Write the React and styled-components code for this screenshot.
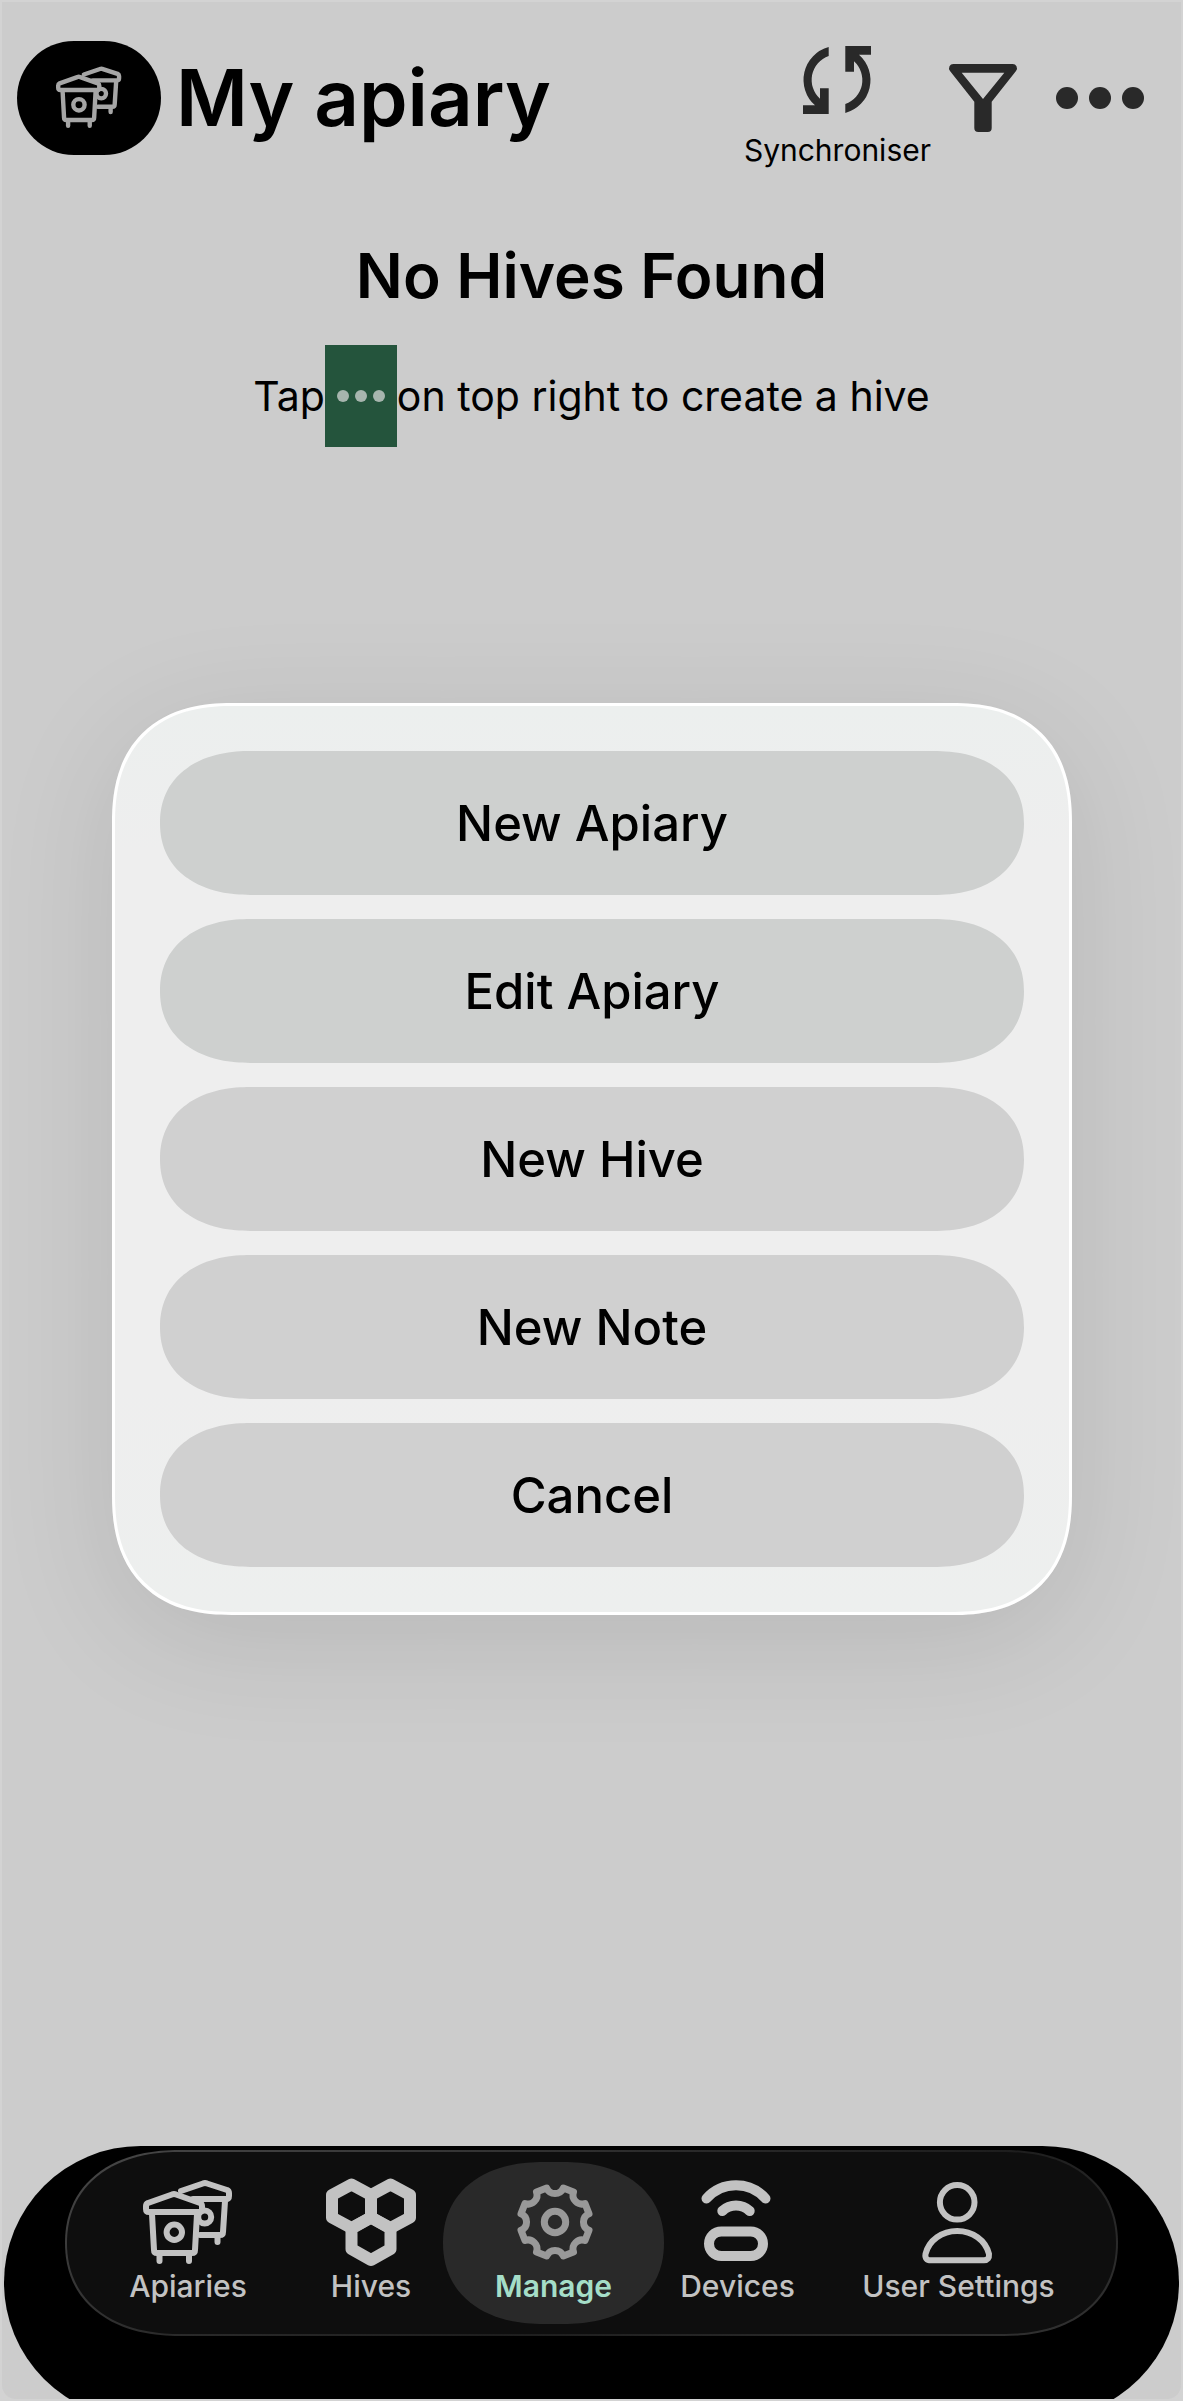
import styled, { createGlobalStyle } from "styled-components";

const GlobalStyle = createGlobalStyle`
    * {
        box-sizing: border-box;
    }

    body {
        margin: 0;
        background-color: rgb(211,211,211);
        font-family: Inter, "Liberation Sans", sans-serif;
    }

    button {
        padding: 0;
        border: none;
        background: none;
        color: inherit;
        font-family: inherit;
        cursor: pointer;
    }

    svg {
        display: block;
        overflow: visible;
    }
`

const Frame = styled.div`
    padding: 2px;
    background-color: rgb(211,211,211);
`

const Screen = styled.div`
    display: flex;
    flex-direction: column;
    min-height: calc(100vh - 4px);
    overflow: hidden;
    border-radius: 0 0 14px 14px;
    background-color: rgb(204,204,204);
    color: black;
`

const Header = styled.header`
    display: flex;
    align-items: flex-start;
    padding: 39px 37px 0 15px;
    gap: 15px;

    h1 {
        flex: 1;
        margin: 0;
        font-size: 78px;
        font-weight: 600;
        line-height: 114px;
        white-space: nowrap;
    }
`

const Badge = styled.button`
    display: flex;
    align-items: center;
    justify-content: center;
    width: 144px;
    height: 114px;
    border-radius: 57px;
    background-color: black;
    color: rgb(166,166,166);
`

const Actions = styled.div`
    display: flex;
    align-items: flex-start;
    color: rgb(41,41,41);
`

const IconButton = styled.button`
    display: flex;
    align-items: center;
    height: 114px;
    margin-left: ${props => props.$gap}px;
`

const SyncButton = styled.button`
    display: flex;
    flex-direction: column;
    align-items: center;
    gap: 18px;
    padding-top: 5px;

    span {
        color: black;
        font-size: 30px;
        line-height: 36px;
    }
`

const Main = styled.main`
    display: flex;
    flex-direction: column;
    align-items: center;
    flex: 1;
    gap: 29px;
    padding-top: 68px;

    h2 {
        margin: 0;
        font-size: 62px;
        font-weight: 600;
        line-height: 80px;
    }

    p {
        display: flex;
        align-items: center;
        margin: 0;
        font-size: 41px;
        line-height: 48px;
    }
`

const Hint = styled.span`
    display: flex;
    align-items: center;
    justify-content: center;
    width: 72px;
    height: 102px;
    background-color: rgb(36,84,60);
    color: rgb(167,181,174);
`

const Overlay = styled.div`
    position: fixed;
    inset: 0;
    display: flex;
    align-items: center;
    justify-content: center;
    padding: 0 111px 83px 112px;
`

const Menu = styled.div`
    display: flex;
    flex-direction: column;
    flex: 1;
    gap: 24px;
    padding: 45px;
    border: 3px solid white;
    border-radius: 104px;
    background: linear-gradient(rgb(236,239,238), rgb(238,238,238) 16%, rgb(238,238,238) 75%, rgb(237,239,238));
    box-shadow: 0 24px 120px rgba(0,0,0,0.1);

    @supports (corner-shape: superellipse(1.25)) {
        border-radius: 120px;
        corner-shape: superellipse(1.25);
    }
`

const MenuItem = styled.button`
    height: 144px;
    border-radius: 76px / 72px;
    background-color: ${props => props.$tinted ? "rgb(206,208,207)" : "rgb(208,208,208)"};
    color: black;
    font-size: 49px;
    font-weight: 500;

    @supports (corner-shape: superellipse(1.15)) {
        border-radius: 90px / 72px;
        corner-shape: superellipse(1.15);
    }
`

/* taller than the visible area, the rounded bottom runs off the screen */
const Dock = styled.footer`
    margin: 0 2px -20px 2px;
    padding: 4px 61px 83px 61px;
    border-radius: 137px;
    background-color: black;
`

const TabBar = styled.nav`
    display: flex;
    height: 186px;
    padding: 10px;
    border: 2px solid transparent;
    border-radius: 98px / 93px;
    background:
        linear-gradient(rgb(14,14,14), rgb(14,14,14)) padding-box,
        linear-gradient(160deg, rgb(72,72,72), rgb(42,42,42) 40%, rgb(30,30,30) 60%, rgb(50,50,50)) border-box;

    @supports (corner-shape: superellipse(1.15)) {
        border-radius: 114px / 93px;
        corner-shape: superellipse(1.15);
    }
`

const Tab = styled.button`
    display: flex;
    flex-direction: column;
    align-items: center;
    flex: ${props => props.$size} 1 0;
    padding-top: 16px;
    border-radius: 86px / 81px;
    background-color: ${props => props.$active ? "rgb(41,41,41)" : "transparent"};
    color: ${props => props.$active ? "rgb(153,153,153)" : "rgb(194,194,194)"};

    @supports (corner-shape: superellipse(1.15)) {
        border-radius: 100px / 81px;
        corner-shape: superellipse(1.15);
    }

    span {
        color: ${props => props.$active ? "rgb(165,222,200)" : "rgb(194,194,194)"};
        font-size: 30px;
        font-weight: ${props => props.$active ? 600 : 500};
        line-height: 36px;
        white-space: nowrap;
    }
`

function LineIcon({ size = 90, width = 6, children }) {
    return (
        <svg width={size} height={size} viewBox="0 0 90 90" fill="none" stroke="currentColor"
            strokeWidth={width} strokeLinecap="round" strokeLinejoin="round" aria-hidden="true">
            {children}
        </svg>
    )
}

function ApiaryIcon({ size }) {
    return (
        <LineIcon size={size}>
            <path d="M38 13 L60 5.500 Q62 4.500 64 5.500 L84 12 Q86 13 86 15 V18 Q86 21 83 21 H50" />
            <path d="M82 23 L80 54 Q80 57 77 57 H57 M74.500 59 V64" />
            <circle cx="61.700" cy="39" r="6.500" />
            <path d="M3 28 Q3 26 5 25 L29 16.500 Q31 15.500 33 16.500 L57 25 Q59 26 59 28 V31 Q59 34 56 34 H6 Q3 34 3 31 Z" />
            <path d="M9 36 L11 72 Q11 75 14 75 H49 Q52 75 52 72 L54 36" />
            <path d="M16.500 77 V83 M46 77 V83" />
            <circle cx="31.300" cy="54.300" r="7.700" />
        </LineIcon>
    )
}

function HivesIcon() {
    return (
        <LineIcon width={12}>
            <path d="M25.500 6.500 L45 17 V39.500 L25.500 50 L6 39.500 V17 Z" />
            <path d="M64.500 6.500 L84 17 V39.500 L64.500 50 L45 39.500 V17 Z" />
            <path d="M45 39.500 L64.500 50.500 V71 L45 82 L25.500 71 V50.500 Z" />
        </LineIcon>
    )
}

function GearIcon() {
    return (
        <LineIcon width={7}>
            <g transform="translate(46 44)">
                <circle r="10.700" />
                <path d="M-8.300 -34 A9 9 0 0 0 8.300 -34 L18.500 -30 A9 9 0 0 0 30 -18.500 L34 -8.300 A9 9 0 0 0 34 8.300 L30 18.500 A9 9 0 0 0 18.500 30 L8.300 34 A9 9 0 0 0 -8.300 34 L-18.500 30 A9 9 0 0 0 -30 18.500 L-34 8.300 A9 9 0 0 0 -34 -8.300 L-30 -18.500 A9 9 0 0 0 -18.500 -30 Z" />
            </g>
        </LineIcon>
    )
}

function DevicesIcon() {
    return (
        <LineIcon width={10}>
            <path d="M13.500 20.500 A39.500 39.500 0 0 1 72.500 20.500" />
            <path d="M29.300 33 A20 20 0 0 1 56.700 33" />
            <rect x="16" y="53.500" width="54" height="24.500" rx="12.250" />
        </LineIcon>
    )
}

function UserIcon() {
    return (
        <LineIcon>
            <circle cx="43.200" cy="24.300" r="17.300" />
            <path d="M11.500 76 C15 62 28 53 43.200 53 S71.500 62 75 76 Q75.500 82.300 70 82.300 H17 Q10.500 82.300 11.500 76 Z" />
        </LineIcon>
    )
}

function SyncIcon() {
    const half = "M25.700 1 A34 34 0 0 0 12 59.300 H0 V68 H25.700 V42.300 H17 V52.700 A25.300 25.300 0 0 1 25.700 10 Z"
    return (
        <svg width="68" height="68" viewBox="0 0 68 68" fill="currentColor" aria-hidden="true">
            <path d={half} />
            <path d={half} transform="rotate(180 34 34)" />
        </svg>
    )
}

function FilterIcon() {
    return (
        <svg width="68" height="68" viewBox="0 0 68 68" fill="currentColor" fillRule="evenodd" aria-hidden="true">
            <path d="M4.500 0 H63.500 A4.300 4.300 0 0 1 67 7 L42.700 37.700 V64 a4 4 0 0 1 -4 4 H29.300 a4 4 0 0 1 -4 -4 V37.700 L1 7 A4.300 4.300 0 0 1 4.500 0 Z M12.700 8.700 L34 35 L55.300 8.700 Z" />
        </svg>
    )
}

function DotsIcon({ width }) {
    return (
        <svg width={width} height={width / 4} viewBox="0 0 88 22" fill="currentColor" aria-hidden="true">
            <circle cx="11" cy="11" r="11" />
            <circle cx="44" cy="11" r="11" />
            <circle cx="77" cy="11" r="11" />
        </svg>
    )
}

const menuItems = [
    { label: "New Apiary", tinted: true },
    { label: "Edit Apiary", tinted: true },
    { label: "New Hive" },
    { label: "New Note" },
    { label: "Cancel" },
]

const tabs = [
    { label: "Apiaries", size: 222, Icon: ApiaryIcon },
    { label: "Hives", size: 144, Icon: HivesIcon },
    { label: "Manage", size: 221, Icon: GearIcon, active: true },
    { label: "Devices", size: 147, Icon: DevicesIcon },
    { label: "User Settings", size: 295, Icon: UserIcon },
]

export default function App() {
    return (
        <Frame>
            <GlobalStyle />
            <Screen>
                <Header>
                    <Badge aria-label="Apiaries">
                        <ApiaryIcon size={66} />
                    </Badge>
                    <h1>My apiary</h1>
                    <Actions>
                        <SyncButton>
                            <SyncIcon />
                            <span>Synchroniser</span>
                        </SyncButton>
                        <IconButton $gap={18} aria-label="Filter">
                            <FilterIcon />
                        </IconButton>
                        <IconButton $gap={39} aria-label="More">
                            <DotsIcon width={88} />
                        </IconButton>
                    </Actions>
                </Header>
                <Main>
                    <h2>No Hives Found</h2>
                    <p>
                        Tap
                        <Hint><DotsIcon width={48} /></Hint>
                        on top right to create a hive
                    </p>
                </Main>
                <Dock>
                    <TabBar>
                        {tabs.map(({ label, size, Icon, active }) => <Tab key={label} $size={size} $active={active}>
                            <Icon />
                            <span>{label}</span>
                        </Tab> )}
                    </TabBar>
                </Dock>
            </Screen>
            <Overlay>
                <Menu role="dialog" aria-label="Apiary actions">
                    {menuItems.map(el => <MenuItem key={el.label} $tinted={el.tinted}>{el.label}</MenuItem> )}
                </Menu>
            </Overlay>
        </Frame>
    )
}
